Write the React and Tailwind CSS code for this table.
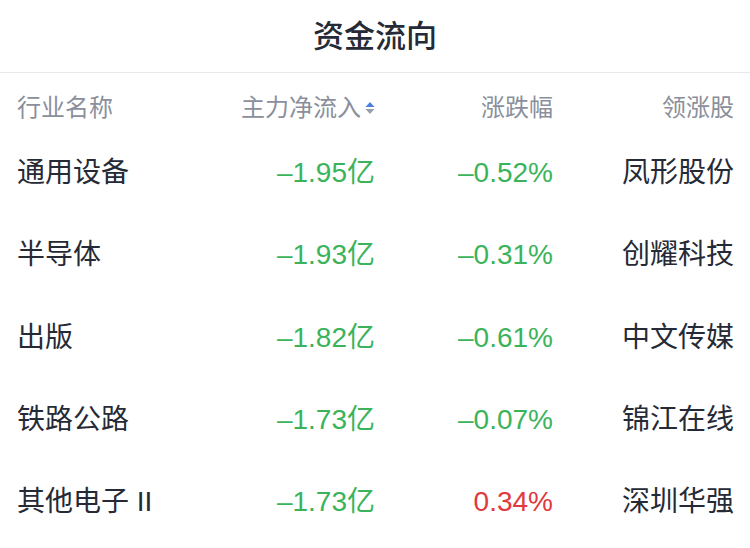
const ROWS = [
  { name: '通用设备', flow: '–1.95亿', change: '–0.52%', up: false, leader: '凤形股份' },
  { name: '半导体', flow: '–1.93亿', change: '–0.31%', up: false, leader: '创耀科技' },
  { name: '出版', flow: '–1.82亿', change: '–0.61%', up: false, leader: '中文传媒' },
  { name: '铁路公路', flow: '–1.73亿', change: '–0.07%', up: false, leader: '锦江在线' },
  { name: '其他电子 II', flow: '–1.73亿', change: '0.34%', up: true, leader: '深圳华强' },
];

function SortIcon() {
  return (
    <svg width="10" height="14" viewBox="0 0 10 14" className="ml-[4px] shrink-0">
      <path d="M5 1 L9.5 6 L0.5 6 Z" fill="#4a80e0" />
      <path d="M0.5 8 L9.5 8 L5 13 Z" fill="#9aa0ab" />
    </svg>
  );
}

export default function App() {
  return (
    <div
      className="h-[548px] w-[750px] overflow-hidden bg-white"
      style={{ fontFamily: '"Liberation Sans", "Noto Sans CJK SC", sans-serif' }}
    >
      <div className="flex h-[73px] items-center justify-center border-b border-[#e8e9ec]">
        <h1 className="text-[31px] font-medium leading-none text-[#262a36]">资金流向</h1>
      </div>

      <div className="flex h-[57px] items-center pl-[17px] pt-[12px] text-[24px] leading-none text-[#8a8f9b]">
        <div className="w-[200px]">行业名称</div>
        <div className="flex w-[158px] items-center justify-end">
          <span>主力净流入</span>
          <SortIcon />
        </div>
        <div className="w-[178px] text-right">涨跌幅</div>
        <div className="w-[181px] text-right">领涨股</div>
      </div>

      <div className="pt-[2px]">
        {ROWS.map((row) => (
          <div key={row.name} className="flex h-[82.3px] items-center pl-[17px] text-[28px] leading-none">
            <div className="w-[200px] text-[#262a36]">{row.name}</div>
            <div className="w-[158px] text-right text-[#3bb35b]">{row.flow}</div>
            <div className={`w-[178px] text-right ${row.up ? 'text-[#e0393e]' : 'text-[#3bb35b]'}`}>
              {row.change}
            </div>
            <div className="w-[181px] text-right text-[#262a36]">{row.leader}</div>
          </div>
        ))}
      </div>
    </div>
  );
}
